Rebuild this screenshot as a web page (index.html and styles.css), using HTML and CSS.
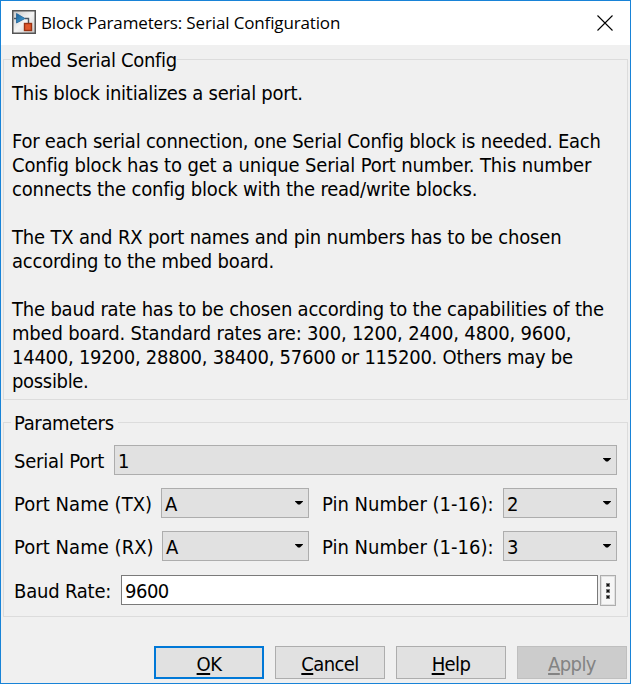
FILE: index.html
```html
<!DOCTYPE html>
<html lang="en">
<head>
<meta charset="utf-8">
<title>Block Parameters: Serial Configuration</title>
<link rel="stylesheet" href="styles.css">
</head>
<body>
<div class="window">
  <header class="titlebar">
    <svg class="app-icon" width="24" height="24" viewBox="0 0 24 24">
      <defs>
        <linearGradient id="bg" x1="0" y1="0" x2="1" y2="1"><stop offset="0" stop-color="#c4c4c4"/><stop offset=".5" stop-color="#f4f4f4"/><stop offset="1" stop-color="#c8c8c8"/></linearGradient>
        <linearGradient id="tri" x1="0" y1="0" x2="1" y2="1"><stop offset="0" stop-color="#1d5f96"/><stop offset="1" stop-color="#4aa8dc"/></linearGradient>
      </defs>
      <rect x=".75" y=".75" width="22.5" height="22.5" fill="url(#bg)" stroke="#555" stroke-width="1.5"/>
      <path d="M2 8.5H5M13 8.5H16.5V14" fill="none" stroke="#4a5560" stroke-width="1.4"/>
      <path d="M4.5 3.5V13L13 8.5Z" fill="url(#tri)" stroke="#1f6298" stroke-width=".8"/>
      <rect x="12.5" y="13.5" width="7" height="7" fill="#e0582c" stroke="#9c3212" stroke-width="1.4"/>
    </svg>
    <h1 class="title">Block Parameters: Serial Configuration</h1>
    <svg class="close" width="16" height="16" viewBox="0 0 16 16"><path d="M.5 .5L15.5 15.5M15.5 .5L.5 15.5" stroke="#000" stroke-width="1.1"/></svg>
  </header>

  <main class="content">
    <section class="group about">
      <h2 class="legend"><span class="t32">mbed Serial Config</span></h2>
      <p><span class="t25">This block initializes a serial port.</span></p>
      <p><span class="t22">For each serial connection, one Serial Config block is needed. Each</span><br>
        <span class="t14">Config block has to get a unique Serial Port number. This number</span><br>
        <span class="t20">connects the config block with the read/write blocks.</span></p>
      <p><span class="t17">The TX and RX port names and pin numbers has to be chosen</span><br>
        <span class="t20">according to the mbed board.</span></p>
      <p><span class="t20">The baud rate has to be chosen according to the capabilities of the</span><br>
        <span class="t17">mbed board. Standard rates are: 300, 1200, 2400, 4800, 9600,</span><br>
        <span class="t25">14400, 19200, 28800, 38400, 57600 or 115200. Others may be</span><br>
        <span class="t32">possible.</span></p>
    </section>

    <section class="group params">
      <h2 class="legend"><span class="t32">Parameters</span></h2>
      <div class="row">
        <span class="label serial">Serial Port</span>
        <div class="select grow">1<i class="arrow"></i></div>
      </div>
      <div class="row">
        <span class="label wide tx">Port Name (TX)</span>
        <div class="select grow">A<i class="arrow"></i></div>
        <span class="label wide pin">Pin Number (1-16):</span>
        <div class="select small">2<i class="arrow"></i></div>
      </div>
      <div class="row">
        <span class="label wide rx">Port Name (RX)</span>
        <div class="select grow">A<i class="arrow"></i></div>
        <span class="label wide pin">Pin Number (1-16):</span>
        <div class="select small">3<i class="arrow"></i></div>
      </div>
      <div class="row baud">
        <span class="label rate">Baud Rate:</span>
        <div class="edit grow">9600</div>
        <div class="more"><i></i><i></i><i></i></div>
      </div>
    </section>

    <footer class="buttons">
      <div class="button default"><span><u>O</u>K</span></div>
      <div class="button"><span><u>C</u>ancel</span></div>
      <div class="button"><span><u>H</u>elp</span></div>
      <div class="button disabled"><span><u>A</u>pply</span></div>
    </footer>
  </main>
</div>
</body>
</html>
```
FILE: styles.css
```css
* { box-sizing: border-box; }
body {
  margin: 0;
  color: #000;
  font: 20px/24px "DejaVu Sans Condensed", "DejaVu Sans", sans-serif;
  font-variant-ligatures: none;
}
.window {
  width: 631px;
  height: 684px;
  border: 1px solid #1883d7;
  background: #f0f0f0;
}
.titlebar {
  display: flex;
  align-items: center;
  height: 44px;
  padding: 0 17px 0 11px;
  background: #fff;
}
.app-icon { margin-top: -2px; }
.title {
  flex: 1;
  margin: 0 0 0 5px;
  font: 17px/24px "Open Sans", "Noto Sans", sans-serif;
  letter-spacing: -0.14px;
  white-space: nowrap;
}
.close { margin-top: -1px; }
.content { padding: 14px 2px 0; }
.group { border: 1px solid #dcdcdc; }
.legend {
  width: max-content;
  margin: -12px 0 0 7px;
  font-size: 20px;
  font-weight: normal;
  line-height: 24px;
  background: #f0f0f0;
}
.about { height: 341px; white-space: nowrap; }
.about p { margin: 0 0 24px 8px; }
.about .legend + p { margin-top: 9px; }
.t14 { letter-spacing: -0.14px; }
.t17 { letter-spacing: -0.17px; }
.t20 { letter-spacing: -0.2px; }
.t22 { letter-spacing: -0.22px; }
.t25 { letter-spacing: -0.25px; }
.t32 { letter-spacing: -0.32px; }
.params { height: 195px; margin-top: 22px; padding: 0 10px; }
.params .legend { margin-left: -3px; padding: 0 4px 0 3px; }
.row {
  display: flex;
  height: 30px;
  margin-bottom: 13px;
  white-space: nowrap;
}
.legend + .row { margin-top: 10px; }
.row.baud { margin-top: 14px; padding-right: 1px; }
.label { flex: none; line-height: 32px; letter-spacing: -0.2px; }
.wide { letter-spacing: 0.05px; }
.serial { width: 100px; }
.tx { width: 147px; }
.rx { width: 148px; }
.pin { width: 181px; margin-left: 13px; letter-spacing: 0; }
.rate { width: 107px; }
.grow { flex: 1; }
.small { width: 114px; }
.select {
  display: flex;
  justify-content: space-between;
  align-items: center;
  padding: 2px 5px 0 3px;
  border: 1px solid #adadad;
  background: #e1e1e1;
}
.arrow {
  width: 8px;
  height: 4px;
  margin-top: -3px;
  background: #000;
  clip-path: polygon(0 0, 100% 0, 100% 25%, 62% 100%, 38% 100%, 0 25%);
}
.edit {
  padding-left: 3px;
  border: 1px solid #7a7a7a;
  line-height: 30px;
  letter-spacing: -0.5px;
  background: #fff;
}
.more {
  display: flex;
  flex-direction: column;
  align-items: center;
  justify-content: center;
  gap: 2px;
  width: 16px;
  height: 31px;
  margin-left: 2px;
  border: 1px solid #adadad;
  background: #f6f6f6;
  box-shadow: inset 0 0 0 1px #e1e1e1;
}
.more i { width: 4px; height: 4px; border: 0.5px solid #777; background: #111; }
.buttons {
  display: flex;
  justify-content: flex-end;
  gap: 11px;
  margin: 29px 1px 0 0;
}
.button {
  width: 110px;
  height: 33px;
  border: 1px solid #adadad;
  line-height: 34px;
  text-align: center;
  letter-spacing: -0.6px;
  background: #e1e1e1;
}
.button u {
  text-decoration-thickness: 2px;
  text-underline-offset: 2px;
  text-decoration-skip-ink: none;
}
.default { border: 2px solid #0078d7; line-height: 32px; }
.disabled { border-color: #bfbfbf; color: #838383; background: #ccc; }
```
